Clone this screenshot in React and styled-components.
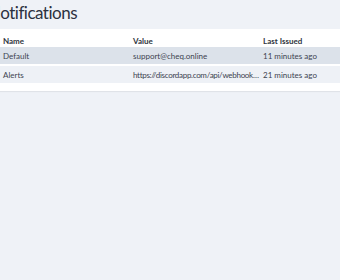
import React from 'react'
import styled, { createGlobalStyle } from 'styled-components'

const GlobalStyle = createGlobalStyle`
  html, body {
    margin: 0;
    padding: 0;
    background: #eff2f7;
    font-family: Lato, 'Open Sans', sans-serif;
    color: #353a46;
  }
`

const Page = styled.div`
  width: 340px;
  height: 280px;
  overflow: hidden;
  background: #eff2f7;
`
const Title = styled.h1`
  box-sizing: border-box;
  margin: 0 0 0 -12px;
  height: 29px;
  padding-top: 2px;
  font-size: 17px;
  font-weight: 400;
  line-height: 22px;
  letter-spacing: -0.5px;
  color: #2c3140;
  white-space: nowrap;
`
const Card = styled.div`
  background: #fff;
  padding-bottom: 8px;
  box-shadow: 0 1px 1px rgba(0, 0, 0, 0.06);
`
const Row = styled.div`
  box-sizing: border-box;
  display: grid;
  grid-template-columns: 130px 130px 1fr;
  height: ${props => props.head ? 18 : 17}px;
  padding-top: ${props => props.head ? 5 : 1}px;
  align-items: center;
  background: ${props => props.bg || 'transparent'};
  margin-bottom: ${props => props.gap || 0}px;
  font-size: 8px;
  font-weight: ${props => props.head ? 700 : 400};
  color: ${props => props.head ? '#2f3440' : '#3d4350'};
`
const Cell = styled.div`
  padding-left: 3px;
  padding-right: ${props => props.tight ? 0 : 4}px;
  letter-spacing: ${props => props.tight ? '-0.3px' : 'normal'};
  white-space: nowrap;
  overflow: hidden;
  text-overflow: ellipsis;
`

const rows = [
  { name: 'Default', value: 'support@cheq.online', issued: '11 minutes ago', bg: '#dce2ea', gap: 2 },
  { name: 'Alerts', value: 'https://discordapp.com/api/webhooks/598213564198711296/abcdef', issued: '21 minutes ago', bg: '#eef1f6', gap: 0, tight: true }
]

const App = () => (
  <Page>
    <GlobalStyle />
    <Title>Notifications</Title>
    <Card>
      <Row head>
        <Cell>Name</Cell>
        <Cell>Value</Cell>
        <Cell>Last Issued</Cell>
      </Row>
      {rows.map(r => (
        <Row key={r.name} bg={r.bg} gap={r.gap}>
          <Cell>{r.name}</Cell>
          <Cell tight={r.tight}>{r.value}</Cell>
          <Cell>{r.issued}</Cell>
        </Row>
      ))}
    </Card>
  </Page>
)

export default App
